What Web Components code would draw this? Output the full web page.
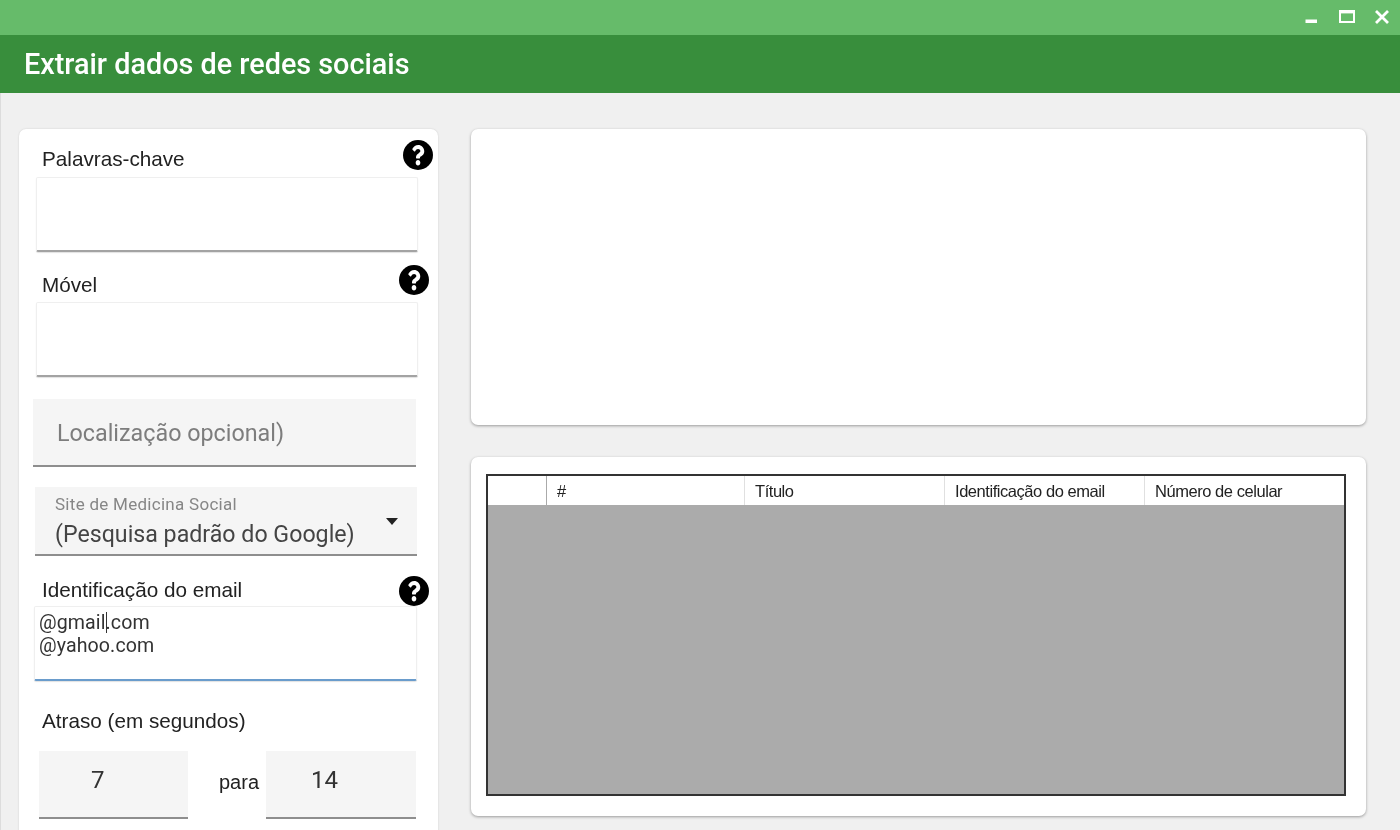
<!DOCTYPE html>
<html lang="pt"><head><meta charset="utf-8"><title>Extrair dados de redes sociais</title>
<style>
html,body{margin:0;height:830px;overflow:hidden;background:#f0f0f0}
</style></head><body>
<app-window></app-window>
<script>
function def(name, css, html){
  customElements.define(name, class extends HTMLElement{
    connectedCallback(){
      if(this.shadowRoot) return;
      const s=this.attachShadow({mode:'open'});
      const a=n=>this.getAttribute(n)||'';
      s.innerHTML='<style>'+css+'</style>'+(typeof html==='function'?html(a):html);
    }
  });
}
const Q='M262.655 90c-54.497 0-89.255 22.957-116.549 63.758-3.536 5.286-2.353 12.415 2.715 16.258l34.699 26.31c5.205 3.947 12.621 3.008 16.665-2.122 17.864-22.658 30.113-35.797 57.303-35.797 20.429 0 45.698 13.148 45.698 32.958 0 14.976-12.363 22.667-32.534 33.976C247.128 238.528 216 254.941 216 296v4c0 6.627 5.373 12 12 12h56c6.627 0 12-5.373 12-12v-1.333c0-28.462 83.186-29.647 83.186-106.667 0-58.002-60.165-102-116.531-102zM256 338c-25.365 0-46 20.635-46 46 0 25.364 20.635 46 46 46s46-20.636 46-46c0-25.365-20.635-46-46-46z';
def('help-icon',':host{display:block;width:30px;height:30px}svg{display:block;width:30px;height:30px}',
  `<svg viewBox="8 8 496 496"><circle cx="256" cy="256" r="248" fill="#000"/><path fill="#fff" transform="translate(256 0) scale(.84 1) translate(-256 0)" d="${Q}"/></svg>`);
def('title-bar',':host{display:flex;height:35px;background:#66bb6a;box-sizing:border-box;align-items:flex-start;flex:none}.sp{flex:1}svg{display:block;width:100px;height:35px}',
  `<div class="sp"></div><svg viewBox="1300 0 100 35"><rect x="1305.5" y="19.5" width="11.5" height="3.5" fill="#fff"/><path d="M1340 11h14v11h-14z" fill="none" stroke="#fff" stroke-width="2"/><rect x="1340" y="10" width="14" height="3.4" fill="#fff"/><path d="M1376 11l12 12M1388 11l-12 12" stroke="#fff" stroke-width="2.8" fill="none"/></svg>`);
def('app-header',':host{display:flex;align-items:center;height:58px;background:#388e3c;color:#fff;padding-left:24px;font:500 28.8px Roboto,sans-serif;flex:none}','<span><slot></slot></span>');
def('label-area',`:host{display:block;font:20.7px "Liberation Sans",sans-serif;color:#222}
.row{display:flex;justify-content:space-between;align-items:flex-start;height:var(--rh,36.5px)}
.l{padding-left:var(--lp,6px);line-height:var(--ll,37px);padding-top:var(--lt,0);}
.box{box-sizing:border-box;height:var(--bh,75px);width:var(--bw,382px);background:#fff;border:1px solid #efefef;border-bottom:var(--bb,2px solid #a3a3a3);border-radius:2px;box-shadow:0 1px 1px rgba(0,0,0,.12);overflow:hidden}`,
  a=>`<div class="row"><span class="l">${a('label')}</span><help-icon></help-icon></div><div class="box"><slot></slot></div>`);
def('filled-input',`:host{display:block;box-sizing:border-box;background:#f5f5f5;border-bottom:2px solid #8e8e8e;font-family:Roboto,sans-serif;color:#333}`,'<slot></slot>');
def('select-field',`:host{display:block;box-sizing:border-box;position:relative;height:69px;background:#f5f5f5;border-bottom:2px solid #8e8e8e;padding:8px 0 0 20px;font-family:Roboto,sans-serif}
.c{font-size:17px;line-height:18px;color:#868686;letter-spacing:.28px;white-space:nowrap}.v{font-size:23.2px;line-height:30px;color:#444;margin-top:6px;white-space:nowrap}
svg{position:absolute;left:351px;top:31px;width:12px;height:7px}`,
  a=>`<div class="c">${a('caption')}</div><div class="v">${a('value')}</div><svg viewBox="0 0 12 7"><path d="M0 0h12L6 7z" fill="#222"/></svg>`);
def('data-grid',`:host{display:block;box-sizing:border-box;height:322px;border:2px solid #333;background:#ababab;font:16.5px "Liberation Sans",sans-serif;color:#222;letter-spacing:-.45px}
.h{display:grid;grid-template-columns:59px 198px 200px 200px 1fr;grid-template-rows:29px;height:29px;background:#fff}
.h>div{box-sizing:border-box;border-right:1px solid #e0e0e0;padding-left:10px;line-height:31px;white-space:nowrap}
.h>div:first-child{border-right-color:#aaa}.h>div:last-child{border:0}`,
  `<div class="h"><div></div><div>#</div><div>Título</div><div>Identificação do email</div><div>Número de celular</div></div>`);
def('ui-card',`:host{display:block;background:#fff;border-radius:7px;box-shadow:0 1px 3px rgba(0,0,0,.36)}`,'<slot></slot>');
def('form-panel',`:host{display:block;width:419px;height:720px;background:#fff;border-radius:7px 7px 0 0;box-shadow:0 0 2px rgba(0,0,0,.15);padding-top:11px;box-sizing:border-box;flex:none}
.a{margin:0 0 0 17px;width:397px}.b{margin:13.5px 0 0 17px;width:393px}
.loc{margin:22.5px 0 0 14px;width:383px;height:68px;font-size:23.3px;color:#7d7d7d;padding:0 0 0 24px;line-height:68px;letter-spacing:0}
select-field{margin:20px 0 0 16px;width:382px}
.mail{margin:20px 0 0 15px;width:395px;--rh:30px;--ll:28px;--lp:8px;--bh:75px;--bw:383px;--bb:2px solid #6a9ccc;--lt:0px}
.txt{padding:4px 0 0 4px;font:19.6px/23.2px Roboto,sans-serif;color:#333;letter-spacing:.1px}
.caret{display:inline-block;width:1.5px;height:21px;background:#333;vertical-align:-4px;margin:0 -1.5px 0 0}
.at{margin:29px 0 0 23px;font:20.7px/22px "Liberation Sans",sans-serif;color:#222}
.d{display:flex;margin:19px 0 0 20px;width:377px}
.d filled-input{height:68px;font-size:24px;line-height:58px}
.i1{width:149px;padding-left:52px}.i2{width:150px;padding-left:45px}
.p{width:78px;box-sizing:border-box;padding-left:31px;white-space:nowrap;font:20px/62px "Liberation Sans",sans-serif;color:#222}`,
`<label-area class="a" label="Palavras-chave"></label-area>
<label-area class="b" label="Móvel" style="--lt:1px"></label-area>
<filled-input class="loc">Localização opcional)</filled-input>
<select-field caption="Site de Medicina Social" value="(Pesquisa padrão do Google)"></select-field>
<label-area class="mail" label="Identificação do email"><div class="txt">@gmail<span class="caret"></span>.com<br>@yahoo.com</div></label-area>
<div class="at">Atraso (em segundos)</div>
<div class="d"><filled-input class="i1">7</filled-input><div class="p">para</div><filled-input class="i2">14</filled-input></div>`);
def('app-window',`:host{display:flex;flex-direction:column;height:830px;overflow:hidden;background:#f0f0f0;margin:0;filter:blur(.35px)}
main{display:flex;gap:33px;padding:36px 0 0 19px;flex:1;min-height:0;box-shadow:inset 1px 0 #dcdcdc}
.r{display:flex;flex-direction:column;gap:32px;width:895px}
.t{height:296px}.u{height:359px;padding:17px 20px 0 15px;box-sizing:border-box}`,
`<title-bar></title-bar><app-header>Extrair dados de redes sociais</app-header>
<main><form-panel></form-panel><div class="r"><ui-card class="t"></ui-card><ui-card class="u"><data-grid></data-grid></ui-card></div></main>`);
</script>
</body></html>
